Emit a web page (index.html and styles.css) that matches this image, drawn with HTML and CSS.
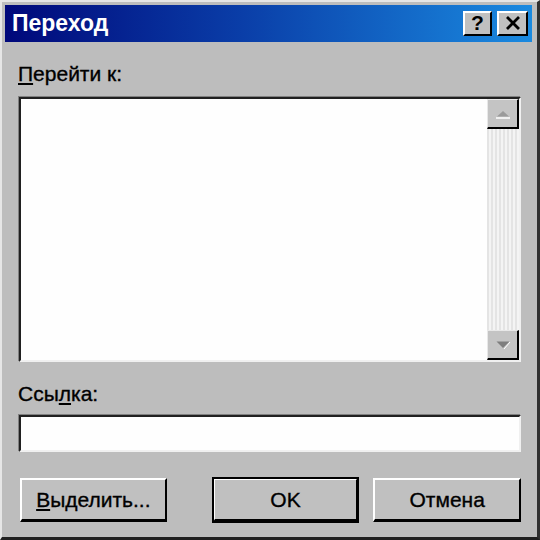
FILE: index.html
```html
<!DOCTYPE html>
<html lang="ru">
  <head>
    <meta charset="UTF-8" />
    <meta name="viewport" content="width=device-width, initial-scale=1.0" />
    <link rel="stylesheet" href="styles.css">
  </head>
  <body>
    <div class="window">
      <div class="titlebar">
        <span class="title">Переход</span>
        <div class="title-buttons">
          <div class="tbtn help">?</div>
          <div class="tbtn close">
            <svg width="16" height="14" viewBox="0 0 16 14">
              <path d="M2 1 L14 13 M14 1 L2 13" stroke="#000" stroke-width="2.8" fill="none" />
            </svg>
          </div>
        </div>
      </div>
      <div class="content">
        <div class="label first-label"><u>П</u>ерейти к:</div>
        <div class="listbox">
          <div class="list-items"></div>
          <div class="scrollbar">
            <div class="sbtn">
              <svg width="16" height="10" viewBox="0 0 16 10">
                <path d="M2 7.5 L8 2 L14 7.5 Z" fill="#9a9a9a" />
                <path d="M1 9 L15 9" stroke="#fff" stroke-width="1.5" />
              </svg>
            </div>
            <div class="track"></div>
            <div class="sbtn">
              <svg width="16" height="10" viewBox="0 0 16 10">
                <path d="M1.5 1.5 L14.5 1.5 L8 8 Z" fill="#7e7e7e" />
                <path d="M9 9 L15 2" stroke="#fff" stroke-width="1" />
              </svg>
            </div>
          </div>
        </div>
        <div class="label second-label">Ссы<u>л</u>ка:</div>
        <div class="textbox"></div>
        <div class="buttons">
          <div class="button select"><u>В</u>ыделить...</div>
          <div class="button default">OK</div>
          <div class="button cancel">Отмена</div>
        </div>
      </div>
    </div>
  </body>
</html>
```

FILE: styles.css
```css
body {
  margin: 0;
  padding: 0;
  background-color: #c0c0c0;
  font-family: "Liberation Sans", Arial, sans-serif;
}
.window {
  width: 540px;
  height: 540px;
  box-sizing: border-box;
  background-color: #bdbdbd;
  border-top: 2px solid #e6e6e6;
  border-left: 2px solid #e6e6e6;
  border-right: 3px solid #303030;
  border-bottom: 3px solid #202020;
  padding: 3px 5px 0 3px;
}
.titlebar {
  height: 37px;
  display: flex;
  align-items: center;
  justify-content: space-between;
  padding: 0 4px 0 7px;
  background: linear-gradient(to right, #00087a, #0a3ea8 45%, #1a8ae0);
}
.title {
  color: #fff;
  font-weight: bold;
  font-size: 23px;
}
.title-buttons {
  display: flex;
  gap: 5px;
  margin-top: -1px;
}
.tbtn {
  height: 25px;
  box-sizing: border-box;
  background-color: #c0c0c0;
  border-top: 2px solid #fff;
  border-left: 2px solid #fff;
  border-right: 2px solid #000;
  border-bottom: 2px solid #000;
  display: flex;
  align-items: center;
  justify-content: center;
}
.help {
  width: 29px;
  font-weight: bold;
  font-size: 21px;
  color: #000;
}
.close {
  width: 31px;
}
.content {
  padding: 0 11px 0 14px;
}
.label {
  font-size: 21px;
  line-height: 23px;
  color: #000;
  margin-left: -1px;
  -webkit-text-stroke: 0.35px #000;
}
.first-label {
  margin-top: 20px;
}
.listbox {
  margin-top: 12px;
  height: 265px;
  box-sizing: border-box;
  background-color: #fefefe;
  border-top: 2px solid #202020;
  border-left: 2px solid #202020;
  border-right: 2px solid #f0f0f0;
  border-bottom: 2px solid #f0f0f0;
  box-shadow: -1px -1px 0 #808080;
  display: flex;
}
.list-items {
  flex: 1;
}
.scrollbar {
  width: 32px;
  display: flex;
  flex-direction: column;
}
.sbtn {
  height: 30px;
  box-sizing: border-box;
  background-color: #c4c4c4;
  border-top: 1px solid #e8e8e8;
  border-left: 1px solid #e8e8e8;
  border-right: 2px solid #000;
  border-bottom: 2px solid #000;
  display: flex;
  align-items: center;
  justify-content: center;
}
.track {
  flex: 1;
  background: repeating-linear-gradient(to right, #e4e4e4 0 2px, #f4f4f4 2px 4px);
}
.second-label {
  margin-top: 20px;
}
.textbox {
  margin-top: 10px;
  height: 37px;
  box-sizing: border-box;
  background-color: #fefefe;
  border-top: 2px solid #202020;
  border-left: 2px solid #202020;
  border-right: 2px solid #f0f0f0;
  border-bottom: 2px solid #f0f0f0;
  box-shadow: -1px -1px 0 #808080;
}
.buttons {
  display: flex;
  margin-top: 26px;
  padding-left: 1px;
}
.button {
  height: 44px;
  box-sizing: border-box;
  background-color: #c0c0c0;
  border-top: 2px solid #fff;
  border-left: 2px solid #fff;
  border-right: 2px solid #000;
  border-bottom: 3px solid #000;
  display: flex;
  align-items: center;
  justify-content: center;
  font-size: 21px;
  color: #000;
  -webkit-text-stroke: 0.35px #000;
}
.select {
  width: 147px;
}
.default {
  width: 146px;
  margin-left: 46px;
  outline: 2px solid #000;
  outline-offset: -1px;
}
.cancel {
  width: 148px;
  margin-left: 15px;
}
```
